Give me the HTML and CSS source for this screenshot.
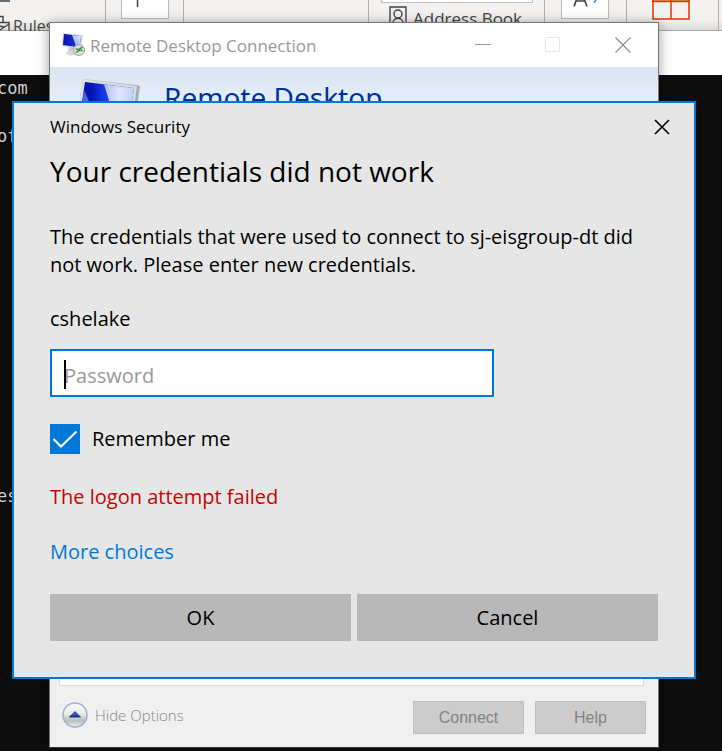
FILE: index.html
```html
<!DOCTYPE html>
<html lang="en">
<head>
<meta charset="utf-8">
<title>Windows Security</title>
<link rel="stylesheet" href="styles.css">
</head>
<body>
<main class="desktop">
  <header class="ribbon">
    <div class="group group-rules">
      <svg class="rules-icon" width="13" height="31" viewBox="0 0 13 31" fill="none" stroke="#444" stroke-width="1.4"><path d="M0 1h10M0 16.500h3v6M0 22.500h9v8M0 30l9-6M0 26l4 1"/></svg>
      <span>Rules</span>
    </div>
    <div class="group group-tile"><div class="tile"><svg width="46" height="18" viewBox="0 0 46 18"><path d="M15.500 0v7" stroke="#444" stroke-width="1.500"/></svg></div></div>
    <div class="group group-wide"></div>
    <div class="group group-book">
      <div class="search-box"></div>
      <div class="book">
        <svg width="18" height="22" viewBox="0 0 18 22" fill="none" stroke="#444" stroke-width="1.400"><path d="M1 22V1h16v21"/><circle cx="9" cy="8" r="4"/><path d="M3.500 19c0-9 11-9 11 0"/></svg>
        <span>Address Book</span>
      </div>
    </div>
    <div class="group group-tile"><div class="tile"><svg width="46" height="18" viewBox="0 0 46 18" fill="none"><path d="M12 6.500L17 -7h3l5 13.500M15 1h8" stroke="#444" stroke-width="1.700"/><path d="M32 2.500l3-4" stroke="#2b8ad6" stroke-width="1.500"/></svg></div></div>
    <div class="group group-grid"><svg width="38" height="20" viewBox="0 0 38 20" fill="none"><path d="M0 0h38v2H0z" fill="#e38b68"/><path d="M1 0v19h36V0M19 0v19M0 1.500h38" stroke="#d83b01" stroke-width="1.500"/></svg></div>
  </header>
  <div class="band"></div>
  <pre class="terminal">com

of














es</pre>

  <section class="rdp">
    <header class="rdp-title">
      <svg width="24" height="24" viewBox="0 0 24 24">
        <defs>
          <linearGradient id="screen" x1="0" y1="0" x2="1" y2="0.200"><stop offset="0" stop-color="#0a0e9c"/><stop offset="1" stop-color="#1a3cf0"/></linearGradient>
          <linearGradient id="glare" x1="0" y1="1" x2="1" y2="0"><stop offset="0" stop-color="#7f9cf5"/><stop offset="1" stop-color="#e6edff"/></linearGradient>
        </defs>
        <path d="M7 14l7 1v4l-4 1-4-2z" fill="#c6cacb"/><ellipse cx="10" cy="20" rx="6" ry="2.500" fill="#d7dbdc"/>
        <path d="M1 0l20 2-2 14L0 13z" fill="#d3d6da"/><path d="M2 1l17 2-1.500 11.500L1 12z" fill="url(#screen)"/><path d="M10 2l9 1-1.500 10.500-3.500-.5z" fill="url(#glare)"/>
        <circle cx="17" cy="17" r="5.500" fill="#d9dfda" stroke="#a1a8a4"/><path d="M14 15.500l3 2-3 2M20.500 14l-3 2 3 2" fill="none" stroke="#32863f" stroke-width="1.500"/>
      </svg>
      <span class="rdp-name">Remote Desktop Connection</span>
      <button class="caption" aria-label="Minimize"><svg width="16" height="16" viewBox="0 0 16 16"><path d="M0 7.500h16" stroke="#999"/></svg></button>
      <button class="caption" aria-label="Maximize" disabled><svg width="16" height="16" viewBox="0 0 16 16"><path d="M.5 .5h14v14H.5z" fill="none" stroke="#e6e6e6"/></svg></button>
      <button class="caption" aria-label="Close"><svg width="16" height="16" viewBox="0 0 16 16"><path d="M.5 .5l15 15M15.500 .5l-15 15" stroke="#8c8c8c" stroke-width="1.100"/></svg></button>
    </header>
    <div class="banner">
      <svg width="64" height="50" viewBox="0 0 64 50">
        <defs>
          <linearGradient id="deep" x1="0" y1="0" x2="1" y2="0"><stop offset="0" stop-color="#0a0f9a"/><stop offset=".25" stop-color="#0614b4"/><stop offset=".5" stop-color="#1c3df5"/></linearGradient>
          <linearGradient id="pale" x1="0" y1="0" x2="1" y2="0"><stop offset="0" stop-color="#b4c0f6"/><stop offset=".5" stop-color="#dfe5ff"/><stop offset="1" stop-color="#c3cffb"/></linearGradient>
        </defs>
        <path d="M3 0l53 6 4 1-6 43H-5z" fill="#a9aaac"/><path d="M3 0l54 7-6 43H-5z" fill="#dcdddf"/>
        <path d="M5 3l49 6-6 41H-2z" fill="url(#deep)"/><path d="M4 11l8 18-5 21h-8z" fill="#4a64e6"/><path d="M24 5.500l30 3.500-6 41H38z" fill="url(#pale)"/>
      </svg>
      <span>Remote Desktop</span>
    </div>
    <div class="rdp-body"><div class="panel"></div></div>
    <footer class="rdp-foot">
      <button class="options">
        <svg width="26" height="26" viewBox="0 0 26 26"><defs><linearGradient id="orb" x1="0" y1="0" x2="0" y2="1"><stop offset="0" stop-color="#fff"/><stop offset=".45" stop-color="#e6ebe8"/><stop offset=".75" stop-color="#b5c0ba"/><stop offset="1" stop-color="#edf6ff"/></linearGradient></defs><circle cx="13" cy="13" r="12" fill="url(#orb)" stroke="#a0abd8" stroke-width="1.500"/><path d="M13 9l6 6H7z" fill="#3152c4"/><path d="M9 13.500h8l2 2H7z" fill="#1d3470"/></svg>
        <span>Hide Options</span>
      </button>
      <button class="push">Connect</button>
      <button class="push">Help</button>
    </footer>
  </section>

  <form class="dialog" role="dialog" aria-labelledby="heading">
    <header class="dialog-title">
      <span>Windows Security</span>
      <button type="button" class="close" aria-label="Close"><svg width="16" height="16" viewBox="0 0 16 16"><path d="M1 1l14 14M15 1L1 15" stroke="#000" stroke-width="1.600"/></svg></button>
    </header>
    <h1 id="heading">Your credentials did not work</h1>
    <p class="message">The credentials that were used to connect to sj-eisgroup-dt did not work. Please enter new credentials.</p>
    <label class="user" for="password">cshelake</label>
    <div class="field"><input type="password" id="password" placeholder="Password"><i class="caret"></i></div>
    <label class="remember">
      <span class="check"><input type="checkbox" checked><svg width="30" height="30" viewBox="0 0 30 30"><path d="M3.500 15l7.500 7.500L26.500 7.500" fill="none" stroke="#fff" stroke-width="2"/></svg></span>
      <span>Remember me</span>
    </label>
    <p class="error">The logon attempt failed</p>
    <a class="more" href="#choices">More choices</a>
    <div class="actions"><button type="submit">OK</button><button type="button">Cancel</button></div>
  </form>
</main>
</body>
</html>
```
FILE: styles.css
```css
* { box-sizing: border-box; }
body { margin: 0; background: #0c0c0c; font-family: "Open Sans", "Noto Sans", sans-serif; }
button { font-family: inherit; border: 0; padding: 0; background: none; }
svg { display: block; flex: none; }
.desktop { position: relative; min-height: 100vh; overflow: hidden; }

.ribbon { display: flex; height: 31px; border-bottom: 1px solid #a8a8a8; background: linear-gradient(#f3f2f1 65%, #dcdbda); color: #444; font-size: 17px; }
.group { flex: none; border-right: 1px solid #b3b0ad; }
.group-rules { display: flex; width: 106px; font-size: 16px; }
.group-rules span { line-height: 24px; padding-top: 14px; }
.group-tile { width: 78px; padding-left: 15px; }
.tile { width: 48px; height: 19px; border: 1px solid #bdbbb8; border-top: 0; background: #fff; }
.group-wide { width: 185px; }
.group-book { width: 176px; padding-left: 12px; }
.search-box { width: 152px; height: 3px; border: 1px solid #c4c2c0; border-top: 0; background: #fff; }
.book { display: flex; gap: 6px; height: 27px; padding: 3px 0 0 8px; }
.book span { line-height: 26px; white-space: nowrap; }
.group-grid { flex: 0 0 92px; padding-left: 25px; }
.group-book + .group-tile { width: 82px; padding-left: 16px; }

.band { position: relative; height: 44px; background: #fff; }
.terminal { margin: 1px 0 0 -3px; color: #ccc; font: 17px/24px "DejaVu Sans Mono", monospace; }

.rdp { position: absolute; top: 22px; right: 63px; bottom: 3px; left: 49px; display: flex; flex-direction: column; border: 1px solid #777; border-bottom-color: #333; background: #f0f0f0; box-shadow: 0 2px 12px rgba(0, 0, 0, .4); }
.rdp-title { display: flex; align-items: center; height: 44px; padding-left: 12px; background: #fff; color: #999; font-size: 17px; }
.rdp-name { flex: 1; padding-left: 4px; }
.caption { display: flex; justify-content: center; width: 70px; }
.banner { display: flex; gap: 20px; height: 80px; padding: 12px 30px; background: linear-gradient(#dae5f2, #f4f8ff); color: #039; font-size: 28px; line-height: 36px; font-family: "Noto Sans", sans-serif; }
.rdp-body { flex: 1; padding: 0 14px 0 9px; }
.panel { height: 100%; border: 1px solid #dcdcdc; background: #fff; }
.rdp-foot { display: flex; align-items: flex-start; gap: 11px; padding: 15px 12px 13px; }
.options { display: flex; align-items: center; gap: 7px; margin-right: auto; color: #888; font-size: 15px; font-weight: 300; line-height: 28px; }
.push { width: 111px; height: 33px; border: 1px solid #bfbfbf; background: #ccc; color: #838383; font: 16px "Liberation Sans", sans-serif; }

.dialog { position: absolute; top: 101px; right: 26px; left: 12px; padding: 10px 36px 36px; border: 2px solid #0078d7; background: #e6e6e6; color: #000; font-size: 20px; line-height: 28px; }
.dialog-title { display: flex; align-items: center; justify-content: space-between; height: 28px; font-size: 17px; }
.close { display: flex; justify-content: center; width: 16px; margin-right: -12px; }
h1 { margin: 8px 0 0; font-size: 28px; font-weight: 400; line-height: 44px; }
p { margin: 0; }
.message { margin-top: 30px; }
.user { display: block; margin-top: 26px; }
.field { position: relative; width: 444px; max-width: 100%; margin-top: 16px; }
.field input { display: block; width: 100%; height: 48px; padding: 4px 12px 0; border: 2px solid #0078d7; border-radius: 0; outline: 0; background: #fff; font: inherit; }
.field input::placeholder { color: #999; opacity: 1; }
.caret { position: absolute; top: 11px; left: 14px; width: 2px; height: 29px; background: #000; }
.remember { display: flex; align-items: center; gap: 12px; margin-top: 27px; }
.check { display: grid; width: 30px; height: 30px; }
.check > * { grid-area: 1 / 1; }
.check input { width: 30px; height: 30px; margin: 0; appearance: none; background: #0078d7; }
.check svg { z-index: 1; pointer-events: none; }
.error { margin-top: 29px; color: #c50500; }
.more { display: block; width: fit-content; margin-top: 27px; color: #0078d7; text-decoration: none; }
.actions { display: grid; grid-template-columns: 1fr 1fr; gap: 6px; margin-top: 28px; }
.actions button { height: 47px; background: #b8b8b8; color: #000; font-size: 20px; }
```
